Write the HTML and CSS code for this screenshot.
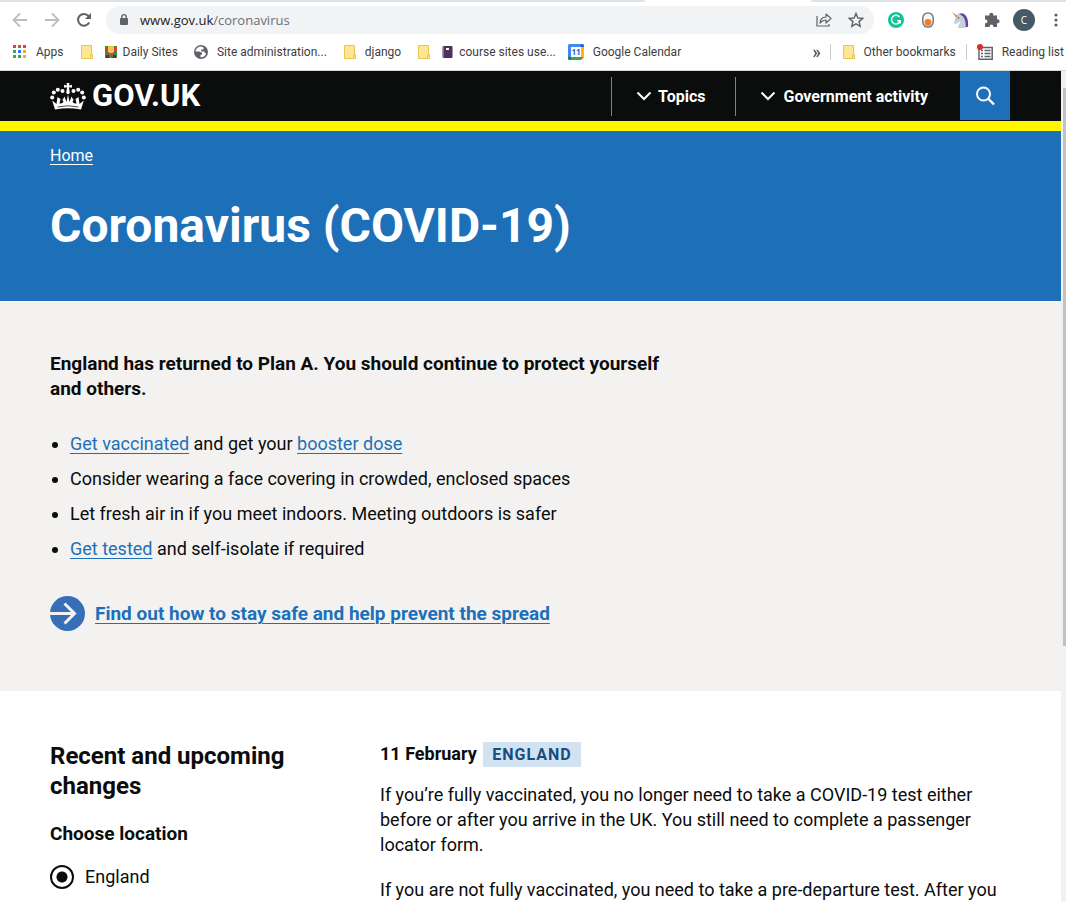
FILE: index.html
```html
<!DOCTYPE html>
<html lang="en">
<head>
<meta charset="utf-8">
<meta name="viewport" content="width=device-width, initial-scale=1">
<title>Coronavirus (COVID-19) - GOV.UK</title>
<link rel="stylesheet" href="styles.css">
</head>
<body>
<div class="chrome">
  <div class="tabstrip"><span class="tabs-before"></span><span class="tabs-active"></span><span class="tabs-after"></span></div>
  <div class="toolbar">
    <button class="nav-btn" aria-label="Back"><svg width="16" height="16" viewBox="0 0 16 16" fill="none" stroke="#bbbdc0" stroke-width="1.8"><path d="M15 8H2M8 1.500L1.500 8L8 14.500"/></svg></button>
    <button class="nav-btn" aria-label="Forward"><svg width="16" height="16" viewBox="0 0 16 16" fill="none" stroke="#bbbdc0" stroke-width="1.800"><path d="M1 8H14M8 1.500L14.500 8L8 14.500"/></svg></button>
    <button class="nav-btn" aria-label="Reload"><svg width="16" height="16" viewBox="0 0 16 16"><path d="M13.200 10.500A5.900 5.900 0 1 1 12.500 4" fill="none" stroke="#5f6368" stroke-width="2"/><path d="M15 1V7H9Z" fill="#5f6368"/></svg></button>
    <div class="omnibox">
      <svg class="lock" width="10" height="14" viewBox="0 0 10 14"><rect x="1" y="5" width="8" height="7" rx="1" fill="#5f6368"/><path d="M2.800 6V3.800a2.200 2.200 0 0 1 4.400 0V6" fill="none" stroke="#5f6368" stroke-width="1.400"/></svg>
      <span class="url">www.gov.uk<span class="path">/coronavirus</span></span>
      <button class="ext" aria-label="Share"><svg width="16" height="16" viewBox="0 0 16 16" fill="none" stroke="#5f6368" stroke-width="1.200"><path d="M1 4V14H13V12"/><path d="M4 11C4.300 7.500 6 5.300 10 5V2L15 6.500L10 11V8C7.500 8 5.700 9 4 11Z" stroke-linejoin="round"/></svg></button>
      <button class="ext" aria-label="Bookmark"><svg width="16" height="16" viewBox="0 0 16 16"><path d="M8 1.500L9.900 6L14.800 6.400L11.100 9.600L12.200 14.300L8 11.800L3.800 14.300L4.900 9.600L1.200 6.400L6.100 6Z" fill="none" stroke="#5f6368" stroke-width="1.400"/></svg></button>
    </div>
    <div class="extensions">
      <button class="ext" aria-label="Grammarly"><svg width="16" height="16" viewBox="0 0 16 16"><circle cx="8" cy="8" r="8" fill="#15c39a"/><path d="M11.500 5A4.400 4.400 0 1 0 12.200 8.800H9.200M12.200 8.800V11.500" fill="none" stroke="#fff" stroke-width="1.400"/></svg></button>
      <button class="ext" aria-label="Toggle"><svg width="12" height="16" viewBox="0 0 12 16"><rect x=".8" y=".8" width="10.400" height="14.400" rx="5.200" fill="#f6f6f6" stroke="#666" stroke-width="1.300"/><circle cx="6" cy="10.400" r="3.400" fill="#f47b2a"/></svg></button>
      <button class="ext" aria-label="Unicorn"><svg width="18" height="16" viewBox="0 0 18 16"><path d="M7 2C13-1 18 4 17 15H14L9 5Z" fill="#65409c"/><path d="M6 3L9 1L9.500 3C13 4 15 8 14.800 16H7C7 13 9 11 9.500 9L5 12L3 11.500L3.500 8Z" fill="#c4d0da"/><path d="M1 0L7 4L5.500 6Z" fill="#f48b35"/><circle cx="7.500" cy="6" r=".7" fill="#344"/></svg></button>
      <button class="ext" aria-label="Extensions"><svg width="16" height="16" viewBox="0 0 16 16" fill="#5f6368"><path d="M1 3.500H5.300V2.800a2 2 0 0 1 4 0v.7H13V7.200h.6a2 2 0 0 1 0 4H13V15H9.300v-.7a1.800 1.800 0 0 0-3.600 0V15H1V11.200h.7a1.800 1.800 0 0 0 0-3.600H1Z"/></svg></button>
      <button class="ext avatar" aria-label="Profile"><span>C</span></button>
      <button class="ext menu" aria-label="Menu"><svg width="4" height="16" viewBox="0 0 4 16" fill="#5f6368"><circle cx="2" cy="3" r="1.600"/><circle cx="2" cy="8" r="1.600"/><circle cx="2" cy="13" r="1.600"/></svg></button>
    </div>
  </div>
  <nav class="bookmarks" aria-label="Bookmarks">
    <a href="#" class="bm apps"><svg width="14" height="14" viewBox="0 0 14 14"><path d="M0 0h3v3H0zM5 0h3v3H5zM10 0h3v3h-3z" fill="#ea4335"/><path d="M0 5h3v3H0zM0 10h3v3H0zM5 10h3v3H5z" fill="#34a853"/><path d="M5 5h3v3H5z" fill="#1a86f0"/><path d="M10 5h3v3h-3zM10 10h3v3h-3z" fill="#fbab05"/></svg>Apps</a>
    <a href="#" class="bm" aria-label="Folder"><svg width="12" height="14" viewBox="0 0 12 14"><path d="M.5.500h10v9h1v4H.500Z" fill="#ffe694" stroke="#e8c64f"/><path d="M9.500 13V10h2" fill="none" stroke="#e8c64f"/></svg></a>
    <a href="#" class="bm tight"><svg width="12" height="12" viewBox="0 0 12 12"><path d="M0 0h12v12H0z" fill="#3c8c3f"/><path d="M0 1h3v4H0zM9 2h3v4H9zM3 7h6v3H3z" fill="#d2452d"/><path d="M3 0h6v6H3z" fill="#f2c83b"/><path d="M4 3h4v4H4z" fill="#f5b48a"/><path d="M1 9h3v3H1zM8 9h3v3H8z" fill="#6b2d29"/></svg>Daily Sites</a>
    <a href="#" class="bm site"><svg width="14" height="14" viewBox="0 0 14 14"><circle cx="7" cy="7" r="7" fill="#5f6368"/><path d="M7.500 1.500C4 1.200 1.600 4 1.600 6.500H5.500L8 7.800V9.800H6.500V12.200C9 12.700 11.500 11 12.200 8.500C11 8.500 10.500 7.500 10.500 6.500H7.200V4.500H9.500V2.500Z" fill="#fff"/></svg>Site administration...</a>
    <a href="#" class="bm django"><svg width="12" height="14" viewBox="0 0 12 14"><path d="M.5.500h10v9h1v4H.500Z" fill="#ffe694" stroke="#e8c64f"/><path d="M9.500 13V10h2" fill="none" stroke="#e8c64f"/></svg>django</a>
    <a href="#" class="bm" aria-label="Folder"><svg width="12" height="14" viewBox="0 0 12 14"><path d="M.5.500h10v9h1v4H.500Z" fill="#ffe694" stroke="#e8c64f"/><path d="M9.500 13V10h2" fill="none" stroke="#e8c64f"/></svg></a>
    <a href="#" class="bm tight"><svg width="11" height="12" viewBox="0 0 11 12"><rect x=".5" width="10" height="12" rx="1" fill="#50305f"/><path d="M4 2h3v2H4z" fill="#fff"/><path d="M1.500 0v12" stroke="#8a6c98"/></svg>course sites use...</a>
    <a href="#" class="bm cal"><svg width="16" height="16" viewBox="0 0 16 16"><path d="M0 1.500Q0 0 1.500 0H13V13H0Z" fill="#4285f4"/><path d="M13 0h1.500Q16 0 16 1.500V3H13Z" fill="#1967d2"/><path d="M13 3h3v10h-3z" fill="#fbbc04"/><path d="M3 13h10v3H3z" fill="#34a853"/><path d="M0 13h3v3H1.500Q0 16 0 14.500Z" fill="#188038"/><path d="M13 13h3l-3 3Z" fill="#ea4335"/><path d="M3 3h10v10H3z" fill="#fff"/><text x="8" y="11" text-anchor="middle" class="cal-day">11</text></svg>Google Calendar</a>
    <span class="bm-end">
      <button class="more" aria-label="More bookmarks">»</button>
      <a href="#" class="bm other"><svg width="12" height="14" viewBox="0 0 12 14"><path d="M.5.500h10v9h1v4H.500Z" fill="#ffe694" stroke="#e8c64f"/><path d="M9.500 13V10h2" fill="none" stroke="#e8c64f"/></svg>Other bookmarks</a>
      <a href="#" class="bm reading"><svg width="16" height="16" viewBox="0 0 16 16"><path d="M2 3.500H15.200V15.200H2Z" fill="none" stroke="#5f6368" stroke-width="1.500"/><path d="M4 6.500h2M7.500 6.500h6M4 9.500h2M7.500 9.500h6M4 12.500h2M7.500 12.500h6" stroke="#5f6368" stroke-width="1.400"/><circle cx="3" cy="3" r="3" fill="#d93025"/></svg>Reading list</a>
    </span>
  </nav>
</div>

<div class="viewport">
  <div class="page">
    <header class="site-header">
      <a href="#" class="brand"><svg width="36" height="27" viewBox="0 0 36 27" fill="#fff"><circle cx="2.200" cy="14.500" r="2"/><circle cx="3.800" cy="9.500" r="2"/><circle cx="7.800" cy="6.800" r="2"/><circle cx="12.500" cy="8" r="2"/><circle cx="33.800" cy="14.500" r="2"/><circle cx="32.200" cy="9.500" r="2"/><circle cx="28.200" cy="6.800" r="2"/><circle cx="23.500" cy="8" r="2"/><path d="M16.500 0h3l-.6 2.400 3-.6v3l-3-.6.7 4.300a1.800 1.800 0 1 1-3.200 0l.7-4.300-3 .6v-3l3 .6Z"/><path d="M5 26.500L2.200 17.500L6.500 21L7.500 14L10.500 16L9.500 20.500Q13 21 13.600 18L12.200 17.500L14.500 13.500L16.500 19L18 11.500L19.500 19L21.500 13.500L23.800 17.500L22.400 18Q23 21 26.500 20.500L25.500 16L28.500 14L29.500 21L33.800 17.500L31 26.500Q18 24 5 26.500Z"/><path d="M7.500 24Q18 21.500 28.500 24" fill="none" stroke="#0b0c0c" stroke-width=".7"/></svg><span>GOV.UK</span></a>
      <nav class="site-nav" aria-label="Main">
        <button class="nav-item"><svg width="16" height="10" viewBox="0 0 16 10" fill="none" stroke="#fff" stroke-width="2"><path d="M1.500 1.500L8 8L14.500 1.500"/></svg>Topics</button>
        <button class="nav-item activity"><svg width="16" height="10" viewBox="0 0 16 10" fill="none" stroke="#fff" stroke-width="2"><path d="M1.500 1.500L8 8L14.500 1.500"/></svg>Government activity</button>
        <button class="search" aria-label="Search"><svg width="20" height="20" viewBox="0 0 20 20" fill="none" stroke="#fff" stroke-width="2"><circle cx="8.500" cy="8" r="6.500"/><path d="M13 12.500L19 18.500" stroke-width="2.400"/></svg></button>
      </nav>
    </header>
    <div class="hero">
      <a href="#" class="crumb">Home</a>
      <h1>Coronavirus (COVID-19)</h1>
    </div>
    <section class="guidance">
      <p class="lead">England has returned to Plan A. You should continue to protect yourself and others.</p>
      <ul>
        <li><a href="#">Get vaccinated</a> and get your <a href="#">booster dose</a></li>
        <li>Consider wearing a face covering in crowded, enclosed spaces</li>
        <li>Let fresh air in if you meet indoors. Meeting outdoors is safer</li>
        <li><a href="#">Get tested</a> and self-isolate if required</li>
      </ul>
      <div class="action"><svg width="35" height="35" viewBox="0 0 35 35"><circle cx="17.500" cy="17.500" r="17.500" fill="#366fb8"/><path d="M0 17.500H24M14.500 7.500L24.500 17.500L14.500 27.500" fill="none" stroke="#f3f2f1" stroke-width="3"/></svg><a href="#">Find out how to stay safe and help prevent the spread</a></div>
    </section>
    <main class="changes">
      <div class="filter">
        <h2>Recent and upcoming changes</h2>
        <fieldset>
          <legend>Choose location</legend>
          <div class="radio"><input type="radio" id="england" name="location" checked><label for="england">England</label></div>
        </fieldset>
      </div>
      <div class="timeline">
        <h3>11 February <span class="tag">England</span></h3>
        <p>If you’re fully vaccinated, you no longer need to take a COVID-19 test either before or after you arrive in the UK. You still need to complete a passenger locator form.</p>
        <p>If you are not fully vaccinated, you need to take a pre-departure test. After you</p>
      </div>
    </main>
  </div>
  <div class="scrollbar"><div class="thumb"></div></div>
</div>
</body>
</html>
```
FILE: styles.css
```css
* { box-sizing: border-box; }
body {
  margin: 0;
  height: 100vh;
  overflow: hidden;
  display: flex;
  flex-direction: column;
  background: #fff;
  color: #0b0c0c;
  font-family: Roboto, "Liberation Sans", sans-serif;
  font-size: 18px;
  line-height: 25px;
}
button { border: 0; padding: 0; margin: 0; background: none; font: inherit; color: inherit; }
svg { display: block; flex: none; }

.chrome {
  flex: none;
  border-bottom: 1px solid #d5d7da;
  font-family: "Open Sans", "Noto Sans", sans-serif;
  font-size: 12px;
  line-height: 16px;
  color: #3c4043;
}
.tabstrip { display: flex; height: 2px; }
.tabs-before { flex: 645; background: #dee1e6; border-bottom-right-radius: 2px; }
.tabs-active { flex: 166; }
.tabs-after { flex: 255; background: #dee1e6; border-bottom-left-radius: 2px; }
.toolbar { display: flex; align-items: center; height: 36px; padding-left: 4px; }
.nav-btn { width: 32px; display: flex; justify-content: center; }
.omnibox {
  flex: 1;
  display: flex;
  align-items: center;
  height: 28px;
  margin-left: 6px;
  padding: 0 2px 0 13px;
  border-radius: 14px;
  background: #f1f3f4;
}
.url { flex: 1; margin-left: 11px; font-size: 13px; line-height: 18px; color: #202124; }
.path { color: #6b6f74; }
.ext { width: 32px; display: flex; align-items: center; justify-content: center; flex: none; }
.extensions { display: flex; align-items: center; padding-left: 6px; }
.avatar span {
  width: 22px;
  height: 22px;
  border-radius: 50%;
  background: #455a64;
  color: #fff;
  font-size: 10px;
  line-height: 22px;
  text-align: center;
}
.menu { width: 26px; padding-left: 6px; }
.bookmarks {
  display: flex;
  align-items: center;
  height: 32px;
  padding: 0 2px 4px 13px;
  white-space: nowrap;
  font-family: Roboto, "Noto Sans", sans-serif;
}
.bm { display: flex; align-items: center; gap: 9px; color: inherit; text-decoration: none; }
.bm.tight { gap: 6px; margin-left: 12px; }
.bm + .bm:not(.tight) { margin-left: 17px; }
.bm + .bm.site { margin-left: 16px; }
.bm + .bm.cal { margin-left: 12px; }
.cal-day { font: bold 8px "Open Sans", sans-serif; fill: #1967d2; }
.bm-end { display: flex; align-items: center; margin-left: auto; }
.more { font-size: 18px; line-height: 18px; margin-right: 9px; }
.other { border-left: 1px solid #c9cbce; padding: 0 10px 0 12px; }
.bm-end .reading { border-left: 1px solid #c9cbce; padding-left: 10px; }
.bm-end .bm + .bm.reading { margin-left: 0; }

.viewport { flex: 1; min-height: 0; display: flex; overflow: hidden; }
.page { flex: 1; min-width: 0; }
.scrollbar { width: 5px; background: #f1f1f1; padding: 17px 0 0 2px; }
.thumb { height: 68.5%; background: #c1c1c1; }

.site-header {
  display: flex;
  justify-content: space-between;
  height: 60px;
  padding: 0 51px 0 50px;
  background: #0b0c0c;
  border-bottom: 10px solid #fff500;
  color: #fff;
}
.brand { display: flex; align-items: center; gap: 6px; color: #fff; text-decoration: none; font-size: 31px; line-height: 30px; font-weight: 700; }
.site-nav { display: flex; align-items: center; font-size: 16px; font-weight: 700; }
.nav-item { display: flex; align-items: center; gap: 6px; height: 39px; padding: 0 29px 0 24px; border-left: 1px solid #7f8385; }
.nav-item.activity { padding-right: 32px; gap: 8px; }
.search { width: 50px; height: 49px; align-self: flex-start; display: flex; align-items: center; justify-content: center; background: #1d70b8; }
.hero { background: #1d70b8; color: #fff; padding: 15px 50px 50px; }
.crumb { display: block; width: max-content; font-size: 16px; line-height: 20px; color: #fff; text-underline-offset: 3px; text-decoration-thickness: 1px; }
h1 { margin: 35px 0 0; font-size: 48px; line-height: 50px; font-weight: 700; }
.guidance { background: #f3f2f1; padding: 50px 50px 60px; }
.lead, .action, legend { font-size: 19px; font-weight: 700; }
.lead { margin: 0 0 30px; max-width: 630px; }
ul { margin: 0 0 35px; padding-left: 20px; }
li { margin-bottom: 10px; }
.guidance a { color: #1d70b8; text-decoration-thickness: 1px; text-underline-offset: 3px; }
.action { display: flex; align-items: center; gap: 10px; }
.changes { display: flex; gap: 30px; padding: 50px 50px 0; }
.filter { flex: 1 1 0; }
.timeline { flex: 0 0 631px; }
h2 { margin: 0 0 20px; font-size: 24px; line-height: 30px; font-weight: 700; }
fieldset { border: 0; margin: 0; padding: 0; }
legend { padding: 0; }
.radio { display: flex; align-items: center; gap: 11px; padding-top: 18px; }
.radio input {
  appearance: none;
  width: 24px;
  height: 24px;
  margin: 0;
  border: 2px solid #0b0c0c;
  border-radius: 50%;
  background: radial-gradient(circle, #0b0c0c 0 5px, #fff 6px);
}
h3 { margin: 0 0 15px; font-size: 18px; line-height: 25px; font-weight: 700; }
.tag { display: inline-block; margin-left: 2px; padding: 0 9px; background: #d2e2f1; color: #144e81; font-size: 16px; letter-spacing: 1px; text-transform: uppercase; }
.timeline p { margin: 0 0 20px; }
```
